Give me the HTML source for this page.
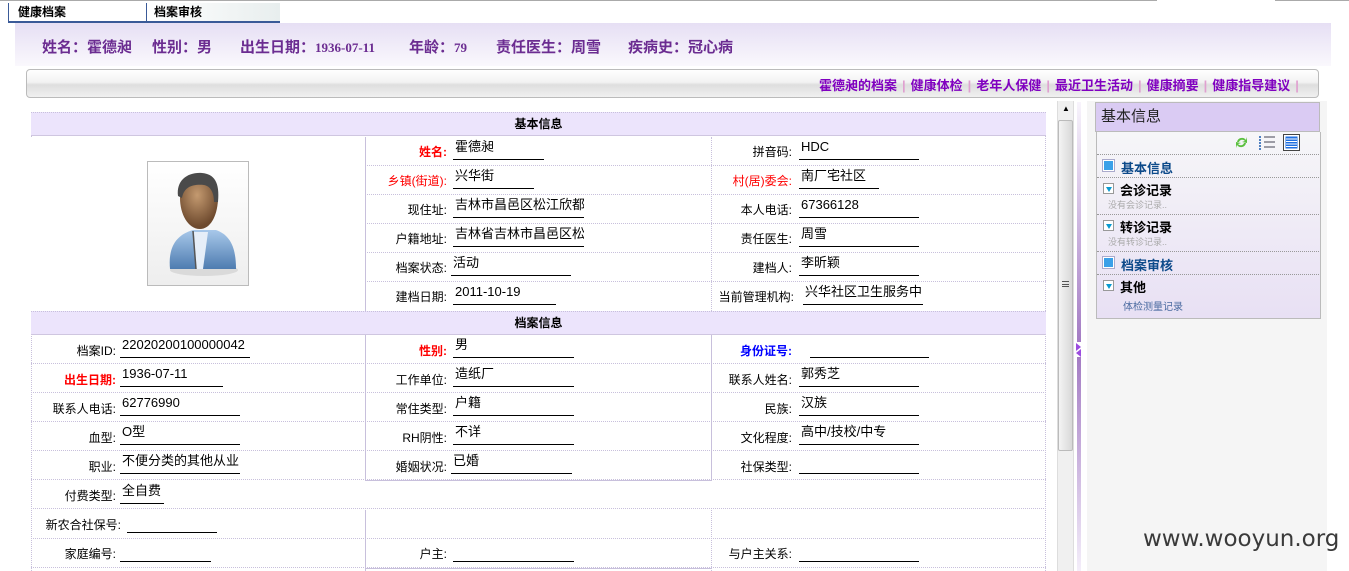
<!DOCTYPE html>
<html><head><meta charset="utf-8">
<style>
*{margin:0;padding:0;box-sizing:border-box}
body{width:1349px;height:571px;overflow:hidden;background:#fff;position:relative;font-family:"Liberation Sans","Noto Sans CJK SC",sans-serif;font-size:12px;color:#000}
.a{position:absolute}
.hb{position:absolute;left:31px;width:1015px;height:24px;background:#ece4fc;border-bottom:1px solid #cfc6e0;border-top:1px dotted #c8c0dc;text-align:center;font-weight:bold;font-size:12px;line-height:23px}
.row{position:absolute;left:31px;width:1015px;height:29px;border-bottom:1px dotted #c8c0dc}
.lb{position:absolute;text-align:right;font-size:12px;line-height:14px;white-space:nowrap}
.v{position:absolute;font-size:13px;line-height:15px;border-bottom:1px solid #000;height:21px;padding-left:2px;white-space:nowrap;overflow:hidden}
.red{color:#f00}.blue{color:#00f}
.hd{color:#6b2c91;font-weight:bold;font-size:15px}
.hd b{font-family:"Liberation Serif",serif;font-size:13px}
.nv{color:#8000c0;font-weight:bold;font-size:13px}
.sep{color:#e0a0d0;margin:0 5px}
.it{position:absolute;left:1097px;width:222px;border-bottom:1px dotted #999}
.ic{display:inline-block;width:11px;height:11px;background:#3aa0e8;border:1px solid #fff;box-shadow:0 0 0 1px #aac}
.dn{display:inline-block;width:11px;height:11px;border:1px solid #999;background:#fff;position:relative;vertical-align:-1px}
.dn:after{content:"";position:absolute;left:2px;top:3px;border-left:3px solid transparent;border-right:3px solid transparent;border-top:5px solid #0a9ad0}
</style></head><body>
<div class="a" style="left:0;top:0;width:1157px;height:1px;background:#aaa"></div>
<div class="a" style="left:1275px;top:0;width:74px;height:1px;background:#aaa"></div>
<div class="a" style="left:8px;top:3px;width:138px;height:20px;border-left:1px solid #3a5a98;border-bottom:2px solid #3a5a98;font-weight:bold;padding-left:9px;line-height:18px">健康档案</div>
<div class="a" style="left:146px;top:3px;width:134px;height:20px;border-left:1px solid #3a5a98;border-bottom:2px solid #3a5a98;background:linear-gradient(to right,#fff,#e8eeee);font-weight:bold;padding-left:7px;line-height:18px">档案审核</div>
<div class="a" style="left:15px;top:23px;width:1316px;height:43px;background:linear-gradient(#e6dff4,#faf8fd)"></div>
<div class="a hd" style="left:42px;top:36px">姓名：霍德昶</div>
<div class="a hd" style="left:152px;top:36px">性别：男</div>
<div class="a hd" style="left:240px;top:36px">出生日期：<b>1936-07-11</b></div>
<div class="a hd" style="left:409px;top:36px">年龄：<b>79</b></div>
<div class="a hd" style="left:496px;top:36px">责任医生：周雪</div>
<div class="a hd" style="left:628px;top:36px">疾病史：冠心病</div>
<div class="a" style="left:26px;top:69px;width:1293px;height:29px;border:1px solid #bbb;border-radius:4px;background:linear-gradient(#fff 0%,#f2f2f2 45%,#dedede 55%,#f0f0f0 100%)"></div>
<div class="a nv" style="left:819px;top:75px">霍德昶的档案<span class="sep">|</span>健康体检<span class="sep">|</span>老年人保健<span class="sep">|</span>最近卫生活动<span class="sep">|</span>健康摘要<span class="sep">|</span>健康指导建议<span class="sep">|</span></div>

<div class="a" style="left:31px;top:112px;width:1015px;height:459px;border-left:1px dotted #c8c0dc;border-right:1px dotted #c8c0dc"></div>
<div class="hb" style="top:112px">基本信息</div>
<div class="row" style="top:137px"></div><div class="row" style="top:166px"></div><div class="row" style="top:195px"></div><div class="row" style="top:224px"></div><div class="row" style="top:253px"></div><div class="row" style="top:282px;border-bottom:none"></div>
<div class="a" style="left:31px;top:137px;width:334px;height:174px;background:#fff"></div>
<div class="a" style="left:365px;top:137px;width:1px;height:174px;background:#c8c0dc"></div>
<div class="a" style="left:711px;top:137px;width:0;height:174px;border-left:1px dotted #c8c0dc"></div>
<div class="a" style="left:147px;top:161px;width:102px;height:125px;border:1px solid #bbb;background:linear-gradient(#fff,#eee)">
<svg width="100" height="123" viewBox="0 0 100 123">
<defs><radialGradient id="sk" cx="45%" cy="35%" r="60%"><stop offset="0" stop-color="#c49a70"/><stop offset="1" stop-color="#6e4a2e"/></radialGradient>
<linearGradient id="sh" x1="0" y1="0" x2="0" y2="1"><stop offset="0" stop-color="#a8c8ea"/><stop offset="1" stop-color="#4e7cb0"/></linearGradient></defs>
<ellipse cx="56" cy="108" rx="34" ry="6" fill="#ccc" opacity=".6"/>
<path d="M22 107 C20 85 28 73 45 68 L68 68 C82 73 88 85 88 107 Z" fill="url(#sh)"/>
<path d="M46 70 L60 70 L55 107 L48 107 Z" fill="#e6eef8"/>
<path d="M45 69 L48 107" stroke="#555" stroke-width="1.5"/>
<path d="M32 36 C32 22 42 15 54 15 C66 15 71 24 70 38 C69 55 62 67 52 67 C40 67 32 52 32 36 Z" fill="url(#sk)"/>
<path d="M30 34 C28 18 40 10 54 11 C66 12 72 20 70 40 L66 40 C66 30 62 24 56 23 C46 22 36 24 34 36 Z" fill="#4a4a4a"/>
</svg></div>
<div class="lb red" style="left:366px;width:81px;top:145px;font-weight:bold">姓名:</div><div class="v" style="left:453px;top:139px;width:91px">霍德昶</div>
<div class="lb red" style="left:366px;width:81px;top:174px">乡镇(街道):</div><div class="v" style="left:453px;top:168px;width:81px">兴华街</div>
<div class="lb" style="left:366px;width:81px;top:203px">现住址:</div><div class="v" style="left:453px;top:197px;width:131px">吉林市昌邑区松江欣都</div>
<div class="lb" style="left:366px;width:81px;top:232px">户籍地址:</div><div class="v" style="left:453px;top:226px;width:131px">吉林省吉林市昌邑区松</div>
<div class="lb" style="left:366px;width:81px;top:261px">档案状态:</div><div class="v" style="left:451px;top:255px;width:120px">活动</div>
<div class="lb" style="left:366px;width:81px;top:290px">建档日期:</div><div class="v" style="left:453px;top:284px;width:103px">2011-10-19</div>
<div class="lb" style="left:712px;width:80px;top:145px">拼音码:</div><div class="v" style="left:799px;top:139px;width:120px">HDC</div>
<div class="lb red" style="left:712px;width:80px;top:174px">村(居)委会:</div><div class="v" style="left:799px;top:168px;width:80px">南厂宅社区</div>
<div class="lb" style="left:712px;width:80px;top:203px">本人电话:</div><div class="v" style="left:799px;top:197px;width:120px">67366128</div>
<div class="lb" style="left:712px;width:80px;top:232px">责任医生:</div><div class="v" style="left:799px;top:226px;width:120px">周雪</div>
<div class="lb" style="left:712px;width:80px;top:261px">建档人:</div><div class="v" style="left:799px;top:255px;width:120px">李昕颖</div>
<div class="lb" style="left:712px;width:82px;top:290px">当前管理机构:</div><div class="v" style="left:803px;top:284px;width:120px">兴华社区卫生服务中.</div>

<div class="hb" style="top:311px">档案信息</div>
<div class="row" style="top:335px"></div><div class="row" style="top:364px"></div><div class="row" style="top:393px"></div><div class="row" style="top:422px"></div><div class="row" style="top:451px"></div><div class="row" style="top:480px"></div><div class="row" style="top:510px"></div><div class="row" style="top:539px"></div>
<div class="a" style="left:365px;top:335px;width:1px;height:146px;background:#c8c0dc"></div>
<div class="a" style="left:365px;top:480px;width:347px;height:1px;background:#c8c0dc"></div>
<div class="a" style="left:711px;top:335px;width:1px;height:146px;background:#c8c0dc"></div>
<div class="a" style="left:365px;top:510px;width:1px;height:61px;background:#c8c0dc"></div>
<div class="a" style="left:711px;top:510px;width:0;height:61px;border-left:1px dotted #c8c0dc"></div>
<div class="a" style="left:365px;top:568px;width:347px;height:1px;background:#c8c0dc"></div>

<div class="lb" style="left:31px;width:85px;top:344px">档案ID:</div><div class="v" style="left:120px;top:337px;width:130px">22020200100000042</div>
<div class="lb red" style="left:31px;width:85px;top:373px;font-weight:bold">出生日期:</div><div class="v" style="left:120px;top:366px;width:103px">1936-07-11</div>
<div class="lb" style="left:31px;width:85px;top:402px">联系人电话:</div><div class="v" style="left:120px;top:395px;width:120px">62776990</div>
<div class="lb" style="left:31px;width:85px;top:431px">血型:</div><div class="v" style="left:120px;top:424px;width:120px">O型</div>
<div class="lb" style="left:31px;width:85px;top:460px">职业:</div><div class="v" style="left:120px;top:453px;width:120px">不便分类的其他从业.</div>
<div class="lb" style="left:31px;width:85px;top:489px">付费类型:</div><div class="v" style="left:120px;top:483px;width:44px">全自费</div>
<div class="lb" style="left:31px;width:90px;top:518px">新农合社保号:</div><div class="v" style="left:127px;top:512px;width:90px"></div>
<div class="lb" style="left:31px;width:85px;top:547px">家庭编号:</div><div class="v" style="left:120px;top:541px;width:91px"></div>

<div class="lb red" style="left:366px;width:81px;top:344px;font-weight:bold">性别:</div><div class="v" style="left:453px;top:337px;width:121px">男</div>
<div class="lb" style="left:366px;width:81px;top:373px">工作单位:</div><div class="v" style="left:453px;top:366px;width:121px">造纸厂</div>
<div class="lb" style="left:366px;width:81px;top:402px">常住类型:</div><div class="v" style="left:453px;top:395px;width:121px">户籍</div>
<div class="lb" style="left:366px;width:81px;top:431px">RH阴性:</div><div class="v" style="left:453px;top:424px;width:121px">不详</div>
<div class="lb" style="left:366px;width:81px;top:460px">婚姻状况:</div><div class="v" style="left:451px;top:453px;width:121px">已婚</div>
<div class="lb" style="left:366px;width:81px;top:547px">户主:</div><div class="v" style="left:453px;top:541px;width:121px"></div>

<div class="lb blue" style="left:712px;width:80px;top:344px;font-weight:bold">身份证号:</div><div class="v" style="left:810px;top:337px;width:119px"></div>
<div class="lb" style="left:712px;width:80px;top:373px">联系人姓名:</div><div class="v" style="left:799px;top:366px;width:120px">郭秀芝</div>
<div class="lb" style="left:712px;width:80px;top:402px">民族:</div><div class="v" style="left:799px;top:395px;width:120px">汉族</div>
<div class="lb" style="left:712px;width:80px;top:431px">文化程度:</div><div class="v" style="left:799px;top:424px;width:120px">高中/技校/中专</div>
<div class="lb" style="left:712px;width:80px;top:460px">社保类型:</div><div class="v" style="left:799px;top:453px;width:120px"></div>
<div class="lb" style="left:712px;width:80px;top:547px">与户主关系:</div><div class="v" style="left:799px;top:541px;width:120px"></div>

<div class="a" style="left:1057px;top:101px;width:17px;height:470px;background:#f0f0f0;border-left:1px solid #ddd;border-right:1px solid #ddd"></div>
<div class="a" style="left:1062px;top:104px;font-size:8px">▲</div>
<div class="a" style="left:1058px;top:120px;width:15px;height:331px;background:linear-gradient(to right,#f4f4f4,#d8d8d8);border:1px solid #bbb;border-radius:2px"></div>
<div class="a" style="left:1062px;top:281px;width:7px;height:6px;border-top:1px solid #555;border-bottom:1px solid #555"></div>
<div class="a" style="left:1062px;top:284px;width:7px;height:1px;background:#555"></div>
<div class="a" style="left:1077px;top:102px;width:4px;height:240px;background:linear-gradient(#f8f4fc,#a47cc4)"></div>
<div class="a" style="left:1077px;top:357px;width:4px;height:214px;background:linear-gradient(#a47cc4,#f4eefa)"></div>
<div class="a" style="left:1076px;top:343px;width:0;height:0;border-top:4px solid transparent;border-bottom:4px solid transparent;border-left:5px solid #9c4ce0"></div>
<div class="a" style="left:1076px;top:349px;width:0;height:0;border-top:4px solid transparent;border-bottom:4px solid transparent;border-right:5px solid #9c4ce0"></div>
<div class="a" style="left:1087px;top:101px;width:240px;height:470px;background:#f5f5f5"></div>
<div class="a" style="left:1095px;top:102px;width:225px;height:30px;background:#dacbf3;border:1px solid #bbb;font-size:15px;line-height:28px;padding-left:5px;color:#222">基本信息</div>
<div class="a" style="left:1096px;top:132px;width:225px;height:187px;border:1px solid #bbb;border-top:none;background:linear-gradient(#f6f6f8,#e8e0f4)"></div>
<svg class="a" style="left:1234px;top:135px" width="15" height="15" viewBox="0 0 15 15"><path d="M3 7 A5 5 0 0 1 12 5 L13 2 L13 8 L8 7 L11 6 A3.5 3.5 0 0 0 5 7 Z M12 8 A5 5 0 0 1 3 10 L2 13 L2 7 L7 8 L4 9 A3.5 3.5 0 0 0 10 8 Z" fill="#5cc040"/></svg>
<svg class="a" style="left:1258px;top:135px" width="18" height="16" viewBox="0 0 18 16"><g fill="#1a5bb0"><circle cx="2" cy="2" r="1"/><circle cx="2" cy="5" r="1"/><circle cx="2" cy="8" r="1"/><circle cx="2" cy="11" r="1"/><circle cx="2" cy="14" r="1"/></g><g stroke="#445" stroke-width="1"><path d="M6 2H17M6 7H17M6 12H17"/></g></svg>
<svg class="a" style="left:1283px;top:134px" width="17" height="17" viewBox="0 0 17 17"><rect x=".5" y=".5" width="16" height="16" fill="#fff" stroke="#444"/><rect x="2.5" y="2.5" width="12" height="12" fill="#1f6fe0"/><path d="M3 5H14M3 7.5H14M3 10H14M3 12.5H14" stroke="#fff"/></svg>
<div class="a" style="left:1097px;top:154px;width:222px;border-top:1px dotted #999"></div>
<div class="it" style="top:155px;height:23px"><span class="ic" style="position:absolute;left:6px;top:5px"></span><span style="position:absolute;left:24px;top:3px;font-weight:bold;color:#0d4a8a;font-size:13px">基本信息</span></div>
<div class="it" style="top:178px;height:37px"><span class="dn" style="position:absolute;left:6px;top:5px"></span><span style="position:absolute;left:23px;top:2px;font-weight:bold;font-size:13px">会诊记录</span><span style="position:absolute;left:11px;top:20px;font-size:9px;color:#aaa">没有会诊记录..</span></div>
<div class="it" style="top:215px;height:37px"><span class="dn" style="position:absolute;left:6px;top:5px"></span><span style="position:absolute;left:23px;top:2px;font-weight:bold;font-size:13px">转诊记录</span><span style="position:absolute;left:11px;top:20px;font-size:9px;color:#aaa">没有转诊记录..</span></div>
<div class="it" style="top:252px;height:23px"><span class="ic" style="position:absolute;left:6px;top:5px"></span><span style="position:absolute;left:24px;top:3px;font-weight:bold;color:#0d4a8a;font-size:13px">档案审核</span></div>
<div class="it" style="top:275px;height:42px;border:none"><span class="dn" style="position:absolute;left:6px;top:5px"></span><span style="position:absolute;left:23px;top:2px;font-weight:bold;font-size:13px">其他</span><span style="position:absolute;left:26px;top:23px;font-size:10px;color:#4a6aa0">体检测量记录</span></div>
<div class="a" style="left:1143px;top:526px;font-family:'DejaVu Sans',sans-serif;font-size:23px;color:#3a3a3a">www.wooyun.org</div>
</body></html>
